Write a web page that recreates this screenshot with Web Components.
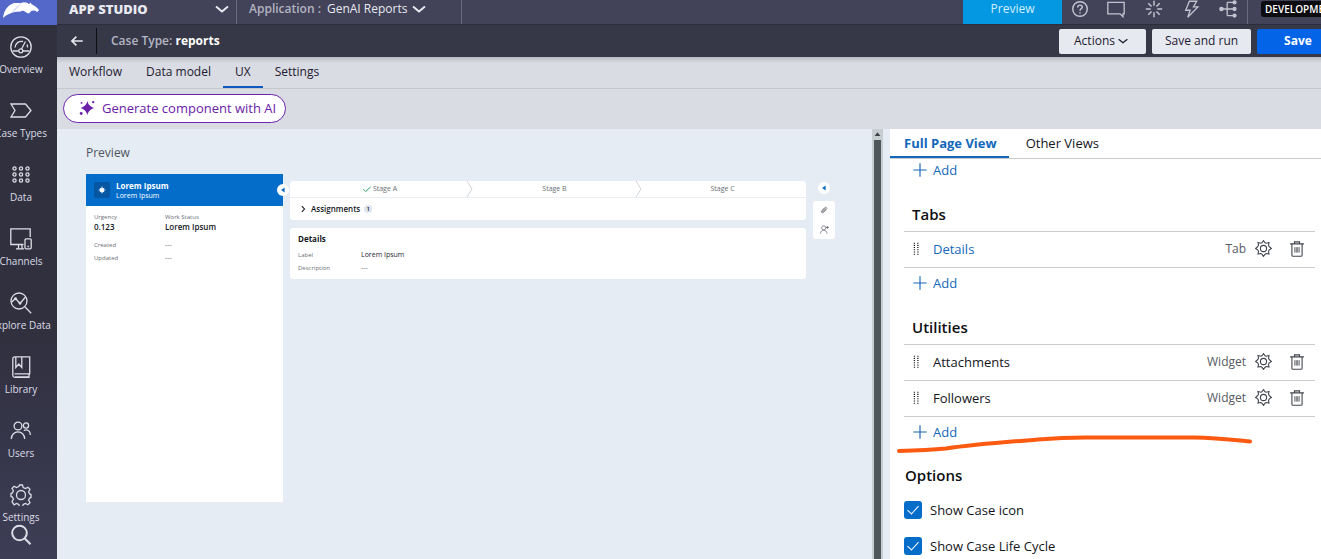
<!DOCTYPE html>
<html lang="en">
<head>
<meta charset="utf-8">
<title>App Studio</title>
<style>
html,body{margin:0;height:100%}
body{font:13px/18px "Open Sans","Noto Sans",sans-serif;color:#1c2030;overflow:hidden}
</style>
</head>
<body>
<app-shell></app-shell>
<script>
const ICONS = {
  overview: '<circle cx="11" cy="11" r="10.2"/><path d="M2.5 15h6M13 15h6.500M15.500 5.500l-4 7.500M5 11.500a6.500 6.500 0 0 1 8-6M17 8.500a6.500 6.500 0 0 1 .5 3"/><circle cx="10.800" cy="14.800" r="2"/>',
  case: '<path d="M1 4h14.500l5.500 6.500-5.500 6.500H1L5 10.500z"/>',
  data: '<g><circle cx="4.500" cy="4.500" r="1.600"/><circle cx="11" cy="4.500" r="1.600"/><circle cx="17.500" cy="4.500" r="1.600"/><circle cx="4.500" cy="10.500" r="1.600"/><circle cx="11" cy="10.500" r="1.600"/><circle cx="17.500" cy="10.500" r="1.600"/><circle cx="4.500" cy="16.500" r="1.600"/><circle cx="11" cy="16.500" r="1.600"/><circle cx="17.500" cy="16.500" r="1.600"/></g>',
  channels: '<path d="M13.500 16.500H.8V.8h19.400V9M6 20.800h8M8.500 16.500v4M12 16.500v4"/><rect x="15" y="10.800" width="6.200" height="10" rx="1"/><path d="M17.500 18.500h1.500"/>',
  explore: '<circle cx="9" cy="9" r="8"/><path d="M14.800 14.800l6.400 6.400M1.200 10.500l4.300-4 4.500 5 5.500-6.500"/><circle cx="5.500" cy="6.700" r=".8"/><circle cx="10" cy="11.200" r=".8"/>',
  library: '<path d="M4.500 17.800h15.200V.8H4.500a2 2 0 0 0-1.700 2v16.500a2 2 0 0 0 1.800 2h14.400v-3.300M5.800 1v10.500l3-3.500 3 3.500V1M5 21h14"/>',
  users: '<circle cx="8" cy="6" r="3.900"/><circle cx="16" cy="5.500" r="2.600"/><path d="M1.300 19c0-9.500 13.400-9.500 13.400 0M13.800 10.500c3.500-1.800 6.600.5 6.600 4.500"/>',
  gear: '<circle cx="11" cy="11" r="4.500"/><path d="M9.500 1h3l.7 2.600 2.300 1 2.400-1.400 2.100 2.100-1.400 2.400 1 2.200 1.400.6v3l-1.400.6-1 2.200 1.400 2.400-2.100 2.100-2.400-1.400-2.300 1-.7 2.600h-3l-.7-2.600-2.300-1-2.400 1.400L2 17.700l1.400-2.400-1-2.200L1 12.500v-3l1.400-.6 1-2.200L2 4.300l2.100-2.100 2.400 1.400 2.300-1z"/>',
  cog: '<circle cx="11" cy="11" r="4"/><path d="M9 3.500L11 .8l2 2.700 1.600.6 3.500-.9-.6 3.400.8 1.800L21.200 11l-2.900 2-.8 1.700.6 3.400-3.400-.6-1.700.8-2 2.900-2-2.900-1.700-.8-3.400.6.6-3.400-.8-1.700-2.900-2 2.900-2.600.8-1.800-.6-3.400 3.500.9z"/>',
  search: '<circle cx="9.500" cy="9" r="7.300"/><path d="M14.800 14.500l5.700 5.700"/>',
  chevron: '<path d="M5 8.500c2 1.500 4 3.500 6 5 2-1.500 4-3.500 6-5"/>',
  back: '<path d="M20 11H3M10 4l-7 7 7 7"/>',
  help: '<circle cx="11" cy="11" r="10"/><path d="M7.800 8.800c0-4.200 6.400-4 6.400-.5 0 2.400-3.200 2.200-3.200 5M11 15.300v2"/>',
  chat: '<path d="M1 3h20v14h-1.500v3.500L16 17H1z"/>',
  burst: '<path d="M11 1v6M11 15v6M1 11h6M15 11h6M4 4l4 4M14 14l4 4M18 4l-4 4M8 14l-4 4"/>',
  bolt: '<path d="M9 1.500h9L14 8.500h5.500L7 21l3-8.500H4.500z"/>',
  tree: '<path d="M2 11h17M10 3v16M10 3h8M10 19h8"/><g fill="currentColor"><circle cx="3" cy="11" r="2"/><circle cx="19" cy="3" r="1.800"/><circle cx="19" cy="11" r="1.800"/><circle cx="19" cy="19" r="1.800"/></g>',
  spark: '<g fill="currentColor" stroke="none"><path d="M11.500 1c1.200 5.500 3.500 7.800 9.500 10-6 2.200-8.300 4.500-9.500 10-1.200-5.500-3.500-7.800-9.500-10 6-2.200 8.300-4.500 9.500-10z"/><circle cx="11.500" cy="11" r="4"/><circle cx="3.500" cy="4" r="1.300"/><circle cx="3" cy="18.500" r="2"/><circle cx="19.500" cy="3" r="1.600"/></g>',
  star: '<path fill="currentColor" stroke="none" d="M11 0l2.500 7L18 5l-2 4.500 6 1.500-6 2 1.500 4-4-1.500L11 22l-2.200-6.500-4.300 1.500L6 13l-6-2 6-1.800L4.500 5l4.300 2z"/>',
  plus: '<path d="M11 .5v21M.5 11h21"/>',
  check: '<path d="M1 11.500l6.500 6.500L21 5"/>',
  right: '<path d="M8 3l7 8-7 8"/>',
  caret: '<path fill="currentColor" stroke="none" d="M4 11l13-9v18z"/>',
  up: '<path fill="currentColor" stroke="none" d="M11 4l9 12H2z"/>',
  clip: '<path d="M18 9l-8.500 9c-3 3-8-1-5-4.500L13 4.500c3-3 8 1 5 4.500M16 6.500l-8.500 9M13.500 5L7 12c-3 3.500 1 6.500 3.500 3.500L16 9"/>',
  follow: '<circle cx="9" cy="7" r="5"/><path d="M1 21c0-11 16-11 16 0M14 6h8M18 2.500v7"/><circle cx="18" cy="6" r="1.500"/>',
  trash: '<path d="M1.500 4h19M7.500 4V1.200h7V4M4 4v15.500c0 1 .5 1.500 1.500 1.500h11c1 0 1.500-.5 1.500-1.500V4"/><path stroke-width="1.100" d="M8 8.500v7.500M10 8.500v7.500M12 8.500v7.500M14 8.500v7.500"/>',
  grip: '<g fill="currentColor" stroke="none"><path d="M7.500 1h2v1.600h-2zM7.500 4.500h2v1.600h-2zM7.500 8h2v1.600h-2zM7.500 11.500h2v1.600h-2zM7.500 15h2v1.600h-2zM7.500 18.500h2v1.600h-2zM13 1h2v1.600h-2zM13 4.500h2v1.600h-2zM13 8h2v1.600h-2zM13 11.500h2v1.600h-2zM13 15h2v1.600h-2zM13 18.500h2v1.600h-2z"/></g>'
};
function define(name, html) {
  customElements.define(name, class extends HTMLElement {
    constructor() {
      super();
      const t = document.createElement('template');
      t.innerHTML = html;
      this.attachShadow({mode: 'open'}).append(t.content.cloneNode(true));
    }
  });
}
const RESET = 'button{font:inherit;color:inherit;border:0;background:none;padding:0;margin:0;cursor:pointer}a{color:inherit;text-decoration:none}';

customElements.define('app-icon', class extends HTMLElement {
  connectedCallback() {
    if (this.shadowRoot) return;
    const s = this.getAttribute('size') || 16, w = this.getAttribute('weight') || 1.4;
    this.attachShadow({mode: 'open'}).innerHTML =
      `<style>:host{display:block;flex:none;width:${s}px;height:${s}px}svg{display:block}</style>
      <svg width="${s}" height="${s}" viewBox="0 0 22 22" fill="none" stroke="currentColor" stroke-width="${w}" aria-hidden="true">${ICONS[this.getAttribute('name')]}</svg>`;
  }
});

customElements.define('nav-item', class extends HTMLElement {
  connectedCallback() {
    if (this.shadowRoot) return;
    this.attachShadow({mode: 'open'}).innerHTML =
      `<style>${RESET}:host{display:block}a{display:flex;flex-direction:column;align-items:center;gap:4px;padding-top:11px;font-size:10px;line-height:14px;white-space:nowrap}</style>
      <a href="#"><app-icon name="${this.getAttribute('icon')}" size="22" weight="1.3"></app-icon><slot></slot></a>`;
  }
});

define('side-nav', `<style>${RESET}
:host{display:flex;flex-direction:column;background:linear-gradient(#30303f 60%,#3d3d56);color:#dcdde6;overflow:hidden}
.logo{display:block;height:25px;background:#5368c9}
svg{display:block}
nav{display:flex;flex-direction:column;gap:13px;padding-right:15px}
button{align-self:stretch;display:flex;justify-content:center;padding-right:15px}
</style>
<a class="logo" href="#" aria-label="Home"><svg width="57" height="25" viewBox="0 0 57 25"><path fill="#fff" d="M21 3L14 3C8 5 4 10 3 18c4-4 8-5 12-6 2-3 4-6 6-9z"/><path fill="#b9c3ee" d="M12 12l9-9v9z"/><path fill="#fff" d="M21 3c3-1.500 6-.8 8 1l2-1.500.5 1.800c3 1 5 3 7.500 5.700l-1.500 2-3-1.500-3 .3-2.500 2.700c-2.500-.8-4-2-5.500-2.800-3 0-8 .8-11 1.600 4-3 6-6 8.500-9.300z"/></svg></a>
<nav aria-label="Main">
<nav-item icon="overview">Overview</nav-item>
<nav-item icon="case">Case Types</nav-item>
<nav-item icon="data">Data</nav-item>
<nav-item icon="channels">Channels</nav-item>
<nav-item icon="explore">Explore Data</nav-item>
<nav-item icon="library">Library</nav-item>
<nav-item icon="users">Users</nav-item>
<nav-item icon="gear">Settings</nav-item>
</nav>
<button aria-label="Search"><app-icon name="search" size="22" weight="2"></app-icon></button>`);

define('top-bar', `<style>${RESET}
:host{display:flex;height:25px;background:#424259;color:#e8e9f0;overflow:hidden;border-bottom:1px solid #2c2c3a;box-sizing:border-box}
button{display:flex;align-items:center}
.row{display:flex;height:18px;align-items:center}
.studio{width:179px;box-sizing:border-box;padding:0 3px 0 12px;justify-content:space-between;font-weight:800}
.app{box-sizing:border-box;width:224px;padding-left:12px;gap:6px;font-size:12px}
.app button{gap:1px}
.cell{border-right:1px solid #6a6b7e}
.app span{color:#b3b4c0;font-weight:600}
.tools{margin-left:auto;flex:none;width:358px;display:flex;overflow:hidden}
.preview{width:99px;background:#0398e1;height:25px;justify-content:center;align-items:flex-start;flex:none;color:#d3eefb;font-size:12px}
.icons{box-sizing:border-box;width:185px;padding:0 10px;justify-content:space-between;color:#c3c4cf;flex:none}
.tools .cell{flex:none;display:flex}
.badge{background:#0c0c10;color:#fff;border-radius:3px;font-size:10px;line-height:16px;height:16px;padding:0 4px;margin:1px 0 0 13px;flex:none;font-weight:600}
</style>
<div class="cell"><button class="row studio">APP STUDIO<app-icon name="chevron" size="22" weight="2"></app-icon></button></div>
<div class="cell"><div class="row app"><span>Application :</span><button>GenAI Reports<app-icon name="chevron" size="22" weight="2"></app-icon></button></div></div>
<div class="tools"><button class="preview">Preview</button>
<div class="cell"><div class="row icons">
<button aria-label="Help"><app-icon name="help" weight="2"></app-icon></button>
<button aria-label="Messages"><app-icon name="chat" size="18" weight="1.6"></app-icon></button>
<button aria-label="Magic"><app-icon name="burst" size="18" weight="1.8"></app-icon></button>
<button aria-label="Actions"><app-icon name="bolt" size="18" weight="1.6"></app-icon></button>
<button aria-label="Structure"><app-icon name="tree" size="18" weight="1.6"></app-icon></button></div></div>
<span class="badge">DEVELOPMENT</span></div>`);

define('case-bar', `<style>${RESET}
:host{display:flex;align-items:center;height:32px;background:#363848;color:#fff;overflow:hidden}
.back{width:40px;height:26px;display:flex;align-items:center;justify-content:center;border-right:1px solid #0d0e14;color:#e8e9ee}
h1{margin:0 0 0 14px;font-size:12px;line-height:18px;font-weight:700}
h1 span{font-weight:600;color:#b4b6c1}
.acts{display:flex;gap:6px;margin:0 -18px 0 auto}
.acts button{height:25px;border-radius:2px;background:#e7e9f0;color:#1c2030;display:flex;align-items:center;justify-content:center;font-size:12px}
.a{width:87px}.b{width:99px}
.acts .c{width:82px;background:#0464e8;color:#fff;font-weight:700}
</style>
<button class="back" aria-label="Back"><app-icon name="back" size="14" weight="2.6"></app-icon></button>
<h1><span>Case Type:</span> reports</h1>
<div class="acts"><button class="a">Actions<app-icon name="chevron" weight="1.8"></app-icon></button><button class="b">Save and run</button><button class="c">Save</button></div>`);

define('view-tabs', `<style>${RESET}
:host{display:block;background:linear-gradient(#b9bbc4,#dadce4 6px)}
nav{display:flex;height:31px;border-bottom:1px solid #c6c8cf;font-size:12px}
a{padding:6px 12px 5px;border-bottom:2px solid transparent}
a[aria-current]{border-color:#1257c0}
</style>
<nav aria-label="Case type"><a href="#">Workflow</a><a href="#">Data model</a><a href="#" aria-current="page">UX</a><a href="#">Settings</a></nav>`);

define('ai-bar', `<style>${RESET}
:host{display:block;background:#dadce4;padding:5px 6px 6px}
button{box-sizing:border-box;height:29px;border:1px solid #6d22ab;border-radius:15px;background:#fff;color:#6b21a8;display:flex;align-items:center;gap:7px;padding:0 9px 2px 15px;font-size:13px}
</style><button><app-icon name="spark"></app-icon>Generate component with AI</button>`);

define('case-preview', `<style>${RESET}
:host{display:flex;background:#e5ecf3;min-width:0}
.pane{flex:1;min-width:0;padding:15px 37px 0 29px}
h2{margin:0;font-size:12px;line-height:18px;font-weight:400;color:#505560}
.grid{display:grid;grid-template-columns:197px 1fr 22px;column-gap:7px;margin-top:12px;font-size:7px;line-height:10px;color:#6b6e76}
.sum{background:#fff;height:328px;position:relative}
header{background:#046dca;color:#fff;height:32px;display:flex;align-items:center;gap:6px;padding-left:8px;font-size:7px;line-height:9px}
header b{font-size:8px;line-height:10px;display:block}
header .ic{width:16px;height:16px;border-radius:2px;background:#0557a3;display:flex;align-items:center;justify-content:center}
.dot{border-radius:50%;background:#fff;width:12px;height:12px;display:flex;align-items:center;justify-content:center;color:#0a6cc4}
.sum .dot{position:absolute;right:-6px;top:10px}
dl{margin:0;display:grid}
dd{margin:0}
dt{font-size:6px}
.facts{grid-template-columns:71px 1fr;padding:6px 8px 0}
.facts dt,.times dt{font-size:6px}
.facts dd{font-size:8px;line-height:9px;font-weight:600;color:#15171d}
.times{grid-template-columns:71px 1fr;padding:9px 8px 0;row-gap:3px}
.mid{display:flex;flex-direction:column;gap:8px;padding-top:7px}
.card{background:#fff;border-radius:3px}
ol{list-style:none;margin:0;padding:0;display:grid;grid-template-columns:180fr 169fr 167fr;height:16px;border-bottom:1px solid #eceff2}
li{position:relative;display:flex;align-items:center;justify-content:center;gap:2px}
li app-icon{color:#1f9d63}
li svg{position:absolute;right:-7px;top:0}
.asg{height:22px;display:flex;align-items:center;padding-left:9px;gap:4px;font-size:8px;font-weight:600;color:#15171d}
.asg i{font-style:normal;font-size:6px;background:#dfe5ec;border-radius:50%;width:8px;height:8px;line-height:8px;text-align:center}
.det{padding:6px 8px}
h3{margin:0 0 6px;font-size:8px;line-height:10px;color:#15171d;font-weight:700}
.det dl{grid-template-columns:63px 1fr;row-gap:3px}
.det dd{color:#24272e}
.det .n{color:#6b6e76}
.util{display:flex;flex-direction:column;align-items:center;gap:7px;padding-top:8px}
.util div{background:#fff;border-radius:3px;width:22px;height:38px;display:flex;flex-direction:column;align-items:center;justify-content:space-around}
.bar{width:7px;padding:0 2px;margin-right:7px;background:#c6ced2;display:flex;flex-direction:column;flex:none;color:#3a4044}
.bar .up{height:11px;display:flex;align-items:center}
.bar .thumb{flex:1;background:#50575a}
</style>
<section class="pane"><h2>Preview</h2>
<div class="grid">
<div class="sum"><header><span class="ic"><app-icon name="star" size="8"></app-icon></span><div><b>Lorem Ipsum</b>Lorem Ipsum</div></header>
<button class="dot" aria-label="Collapse summary"><app-icon name="caret" size="6"></app-icon></button>
<dl class="facts"><dt>Urgency</dt><dt>Work Status</dt><dd>0.123</dd><dd>Lorem Ipsum</dd></dl>
<dl class="times"><dt>Created</dt><dd>---</dd><dt>Updated</dt><dd>---</dd></dl></div>
<div class="mid">
<div class="card"><ol>
<li><app-icon name="check" size="8" weight="2.6"></app-icon>Stage A<svg width="14" height="16" viewBox="0 0 14 16" fill="none" stroke="#cfd3d8"><path d="M4 0l5 8-5 8"/></svg></li>
<li>Stage B<svg width="14" height="16" viewBox="0 0 14 16" fill="none" stroke="#cfd3d8"><path d="M4 0l5 8-5 8"/></svg></li><li>Stage C</li></ol>
<div class="asg"><app-icon name="right" size="8" weight="3"></app-icon>Assignments<i>1</i></div></div>
<div class="card det"><h3>Details</h3><dl><dt>Label</dt><dd>Lorem Ipsum</dd><dt>Description</dt><dd class="n">---</dd></dl></div>
</div>
<div class="util"><button class="dot" aria-label="Open utilities"><app-icon name="caret" size="6"></app-icon></button>
<div><button aria-label="Attachments"><app-icon name="clip" size="8" weight="2"></app-icon></button><button aria-label="Followers"><app-icon name="follow" size="9" weight="1.8"></app-icon></button></div></div>
</div></section>
<div class="bar" aria-hidden="true"><div class="up"><app-icon name="up" size="7"></app-icon></div><div class="thumb"></div></div>`);

define('add-button', `<style>${RESET}
:host{display:block;padding-left:9px}
button{display:flex;align-items:center;gap:6px;height:24px;padding-bottom:2px;box-sizing:border-box;color:#1568b8}
</style><button><app-icon name="plus" size="14" weight="1.8"></app-icon>Add</button>`);

define('region-section', `<style>
:host{display:block;position:relative}
h3{margin:0;padding:21px 8px 7px;font-size:15px;line-height:20px;font-weight:600;color:#0e0f12}
ul{margin:0 0 4px;padding:0;border-top:1px solid #c9cbcf}
</style><h3><slot name="title"></slot></h3><ul role="list"><slot></slot></ul><add-button></add-button><slot name="mark"></slot>`);

define('region-row', `<style>${RESET}
:host{display:flex;align-items:center;box-sizing:border-box;height:36px;border-bottom:1px solid #c9cbcf;padding:0 10px 2px 5px;color:#14161b}
.n{margin-left:10px;flex:1}
.t{color:#565a63;margin-right:9px;font-size:12px}
button{color:#40444c}
.d{margin-left:17px}
.g{color:#14161b}
</style><app-icon class="g" name="grip" size="14"></app-icon><span class="n"><slot></slot></span><span class="t"><slot name="type"></slot></span>
<button aria-label="Configure"><app-icon name="cog" size="17"></app-icon></button><button class="d" aria-label="Delete"><app-icon name="trash" size="16" weight="1.5"></app-icon></button>`);

define('check-option', `<style>
:host{display:block}
label{display:flex;align-items:center;gap:8px;height:36px;color:#14161b}
input{appearance:none;margin:0;width:18px;height:18px;border-radius:3px;background:#046dca;display:grid;place-items:center}
input:checked::before{content:"";width:5px;height:10px;margin-top:-3px;border:solid #fff;border-width:0 1px 1px 0;transform:rotate(42deg)}
</style><label><input type="checkbox" checked><slot></slot></label>`);

define('stroke-mark', `<style>:host{position:absolute;left:-8px;bottom:-10px}svg{display:block}</style>
<svg width="358" height="22" viewBox="0 0 358 22" fill="none" stroke="#fb5a10" stroke-width="4" stroke-linecap="round" aria-hidden="true"><path d="M3 18C24 17.500 40 16.500 50 15.500C80 11 110 9 142 6.500C160 5 180 4.500 190 4.500H298C320 5 338 7 354 8.500"/></svg>`);

define('views-panel', `<style>${RESET}
:host{display:block;background:#fff}
nav{display:flex;height:29px;border-bottom:1px solid #c9cbcf}
nav a{padding:5px 12px 4px 14px;border-bottom:2px solid transparent;color:#14161b}
nav a+a{margin-left:3px}
nav a[aria-current]{color:#1267ba;font-weight:700;border-color:#1267ba}
.body{padding:0 6px 0 14px}
region-row a{color:#1568b8}
h3{margin:0;padding:20px 1px 7px;font-size:15px;line-height:20px;font-weight:600;color:#0e0f12}
</style>
<nav aria-label="Views"><a href="#" aria-current="page">Full Page View</a><a href="#">Other Views</a></nav>
<div class="body"><add-button></add-button>
<region-section><span slot="title">Tabs</span><region-row role="listitem"><a href="#">Details</a><span slot="type">Tab</span></region-row></region-section>
<region-section><span slot="title">Utilities</span><region-row role="listitem">Attachments<span slot="type">Widget</span></region-row><region-row role="listitem">Followers<span slot="type">Widget</span></region-row><stroke-mark slot="mark"></stroke-mark></region-section>
<h3>Options</h3><check-option>Show Case icon</check-option><check-option>Show Case Life Cycle</check-option></div>`);

define('app-shell', `<style>
:host{display:grid;grid-template-columns:57px minmax(0,1fr);height:100vh;overflow:hidden}
.col{display:flex;flex-direction:column;min-width:0;min-height:0}
main{flex:1;min-height:0;display:grid;grid-template-columns:minmax(0,1fr) 431px}
</style><side-nav></side-nav><div class="col"><top-bar></top-bar><case-bar></case-bar><view-tabs></view-tabs><ai-bar></ai-bar>
<main><case-preview></case-preview><views-panel></views-panel></main></div>`);
</script>
</body>
</html>
